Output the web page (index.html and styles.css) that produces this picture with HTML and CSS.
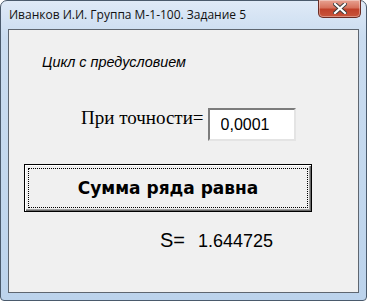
FILE: index.html
```html
<!DOCTYPE html>
<html lang="ru">
<head>
<meta charset="UTF-8" />
<title>Задание 5</title>
<link rel="stylesheet" href="styles.css">
</head>
<body>
  <div class="window">
    <div class="titlebar">
      <span class="title">Иванков И.И. Группа М-1-100. Задание 5</span>
      <button class="close" aria-label="Закрыть">
        <svg width="14" height="11" viewBox="0 0 14 11">
          <path d="M2 1 L12 10 M12 1 L2 10" stroke="#3b3b3b" stroke-width="4" stroke-linecap="square"/>
          <path d="M2 1 L12 10 M12 1 L2 10" stroke="#fff" stroke-width="2.2" stroke-linecap="square"/>
        </svg>
      </button>
    </div>
    <div class="client">
      <div class="caption">Цикл с предусловием</div>
      <div class="eps-row">
        <span class="eps-label">При точности=</span>
        <input class="eps-input" type="text" value="0,0001">
      </div>
      <button class="calc-btn"><span class="focus">Сумма ряда равна</span></button>
      <div class="result">
        <span class="s-label">S=</span>
        <span class="s-value">1.644725</span>
      </div>
    </div>
  </div>
</body>
</html>
```

FILE: styles.css
```css
html, body {
  margin: 0;
  height: 100%;
}

body {
  background: #fff;
}

.window {
  box-sizing: border-box;
  width: 367px;
  height: 301px;
  padding: 0 7px 7px 7px;
  border: 1px solid #4a5a6c;
  border-radius: 7px 7px 4px 4px;
  background: linear-gradient(180deg, #dfeaf7 0%, #cadcf0 12%, #c3d8ee 60%, #bcd3ec 100%);
  display: flex;
  flex-direction: column;
}

.titlebar {
  height: 28px;
  display: flex;
  align-items: flex-start;
  justify-content: space-between;
}

.title {
  font-family: "Open Sans", "Noto Sans", sans-serif;
  font-size: 12px;
  color: #111;
  margin-top: 5px;
  margin-left: 1px;
}

.close {
  width: 43px;
  height: 18px;
  margin-top: -1px;
  margin-right: -2px;
  padding: 0;
  border: 1px solid #6b2c24;
  border-top: none;
  border-radius: 0 0 5px 5px;
  background: linear-gradient(180deg, #e8a393 0%, #d7725d 45%, #c0412a 55%, #c8553b 100%);
  box-shadow: inset 0 0 0 1px rgba(255,255,255,0.35);
  display: flex;
  align-items: center;
  justify-content: center;
}

.client {
  flex: 1;
  background: #f0f0f0;
  border: 1px solid #5e6670;
}

.caption {
  font-family: "Liberation Sans", Arial, sans-serif;
  font-style: italic;
  font-size: 14.4px;
  color: #000;
  margin: 24px 0 0 33px;
}

.eps-row {
  display: flex;
  align-items: flex-start;
  margin: 37px 0 0 72px;
}

.eps-label {
  font-family: "Liberation Serif", "Times New Roman", serif;
  font-size: 19px;
  color: #000;
}

.eps-input {
  box-sizing: border-box;
  width: 88px;
  height: 33px;
  margin: 1px 0 0 4px;
  padding: 0 0 0 11px;
  border: 2px solid;
  border-color: #7c7c7c #e4e4e4 #e4e4e4 #7c7c7c;
  background: #fff;
  font-family: "Liberation Sans", Arial, sans-serif;
  font-size: 16px;
  color: #000;
  outline: none;
}

.calc-btn {
  display: block;
  box-sizing: border-box;
  width: 288px;
  height: 48px;
  margin: 23px 0 0 15px;
  padding: 3px;
  border: 1px solid #000;
  background: #f0f0f0;
  box-shadow: inset 1px 1px 0 #fff, inset -1px -1px 0 #696969, inset -2px -2px 0 #a0a0a0;
  cursor: pointer;
}

.focus {
  display: flex;
  align-items: center;
  justify-content: center;
  height: 100%;
  box-sizing: border-box;
  border: 1px dotted #000;
  font-family: "DejaVu Sans", Tahoma, sans-serif;
  font-weight: bold;
  font-size: 17px;
  color: #000;
}

.result {
  display: flex;
  align-items: baseline;
  margin: 17px 0 0 151px;
}

.s-label {
  font-family: "Liberation Sans", Arial, sans-serif;
  font-size: 20px;
  color: #000;
}

.s-value {
  font-family: "Liberation Sans", Arial, sans-serif;
  font-size: 18px;
  color: #000;
  margin-left: 13px;
}
```
